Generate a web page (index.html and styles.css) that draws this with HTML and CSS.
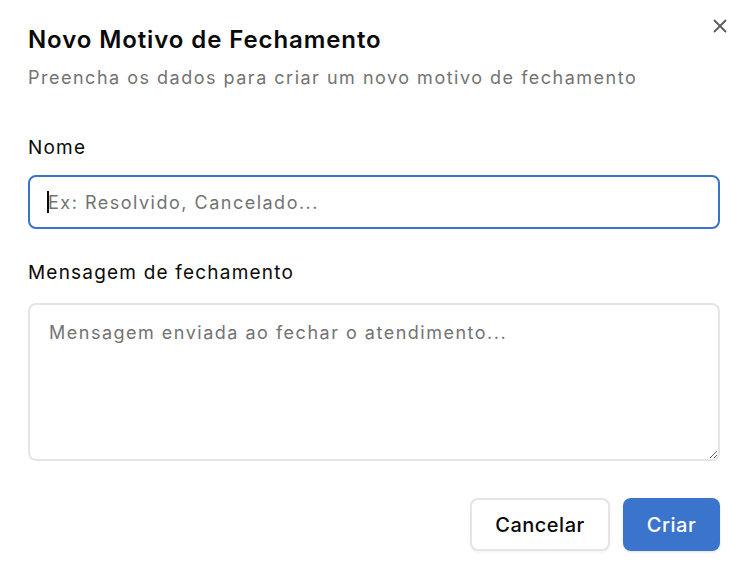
FILE: index.html
```html
<!DOCTYPE html>
<html lang="pt-BR">
<head>
    <meta charset="UTF-8">
    <meta name="viewport" content="width=device-width, initial-scale=1.0">
    <title>Novo Motivo de Fechamento</title>
    <link rel="stylesheet" href="styles.css">
</head>
<body>
    <div class="dialog">
        <button class="close-button" aria-label="Fechar">
            <svg width="16" height="16" viewBox="0 0 16 16" fill="none" stroke="#5a5a5a" stroke-width="1.8" stroke-linecap="round">
                <path d="M2.5 2.5 L13.5 13.5 M13.5 2.5 L2.5 13.5"/>
            </svg>
        </button>

        <div class="dialog-header">
            <h2>Novo Motivo de Fechamento</h2>
            <p>Preencha os dados para criar um novo motivo de fechamento</p>
        </div>

        <div class="field first">
            <label for="nome">Nome</label>
            <div class="input-wrap">
                <input type="text" id="nome" class="focused" placeholder="Ex: Resolvido, Cancelado...">
                <span class="caret"></span>
            </div>
        </div>

        <div class="field">
            <label for="mensagem" class="label-wide">Mensagem de fechamento</label>
            <textarea id="mensagem" placeholder="Mensagem enviada ao fechar o atendimento..."></textarea>
        </div>

        <div class="dialog-footer">
            <button class="btn btn-outline">Cancelar</button>
            <button class="btn btn-primary">Criar</button>
        </div>
    </div>
</body>
</html>
```

FILE: styles.css
```css
* {
    margin: 0;
    padding: 0;
    box-sizing: border-box;
}
body {
    font-family: Inter, 'Noto Sans', sans-serif;
    background-color: #fff;
    color: #0a0a0a;
}
.dialog {
    position: relative;
    width: 752px;
    height: 572px;
    padding: 24px 32px 0 28px;
}
.close-button {
    position: absolute;
    top: 18px;
    right: 24px;
    width: 16px;
    height: 16px;
    background: none;
    border: none;
    cursor: pointer;
}
.close-button svg {
    display: block;
}
.dialog-header h2 {
    font-size: 24px;
    line-height: 32px;
    font-weight: 600;
    letter-spacing: 0.9px;
    color: #0a0a0a;
}
.dialog-header p {
    margin-top: 8px;
    font-size: 18px;
    line-height: 28px;
    letter-spacing: 1.5px;
    color: #737373;
}
.field {
    margin-top: 30px;
}
.field.first {
    margin-top: 42px;
}
label {
    display: block;
    font-size: 19px;
    line-height: 28px;
    font-weight: 400;
    letter-spacing: 1.2px;
    margin-bottom: 13px;
}
.label-wide {
    margin-bottom: 16px;
}
.input-wrap {
    position: relative;
}
input, textarea {
    width: 100%;
    font-family: inherit;
    font-size: 18px;
    letter-spacing: 1.5px;
    color: #0a0a0a;
    border: 2px solid #e5e5e5;
    border-radius: 8px;
    background: #fff;
    outline: none;
}
input {
    height: 54px;
    padding: 0 18px;
}
input.focused {
    border-color: #3a74c9;
}
.caret {
    position: absolute;
    left: 19px;
    top: 16px;
    width: 2px;
    height: 22px;
    background: #0a0a0a;
}
textarea {
    display: block;
    height: 158px;
    padding: 14px 19px;
    line-height: 28px;
    resize: vertical;
}
input::placeholder, textarea::placeholder {
    color: #737373;
}
.dialog-footer {
    display: flex;
    justify-content: flex-end;
    gap: 13px;
    margin-top: 37px;
}
.btn {
    height: 53px;
    padding: 0;
    font-family: inherit;
    font-size: 20px;
    font-weight: 500;
    letter-spacing: 0.5px;
    border-radius: 8px;
    cursor: pointer;
}
.btn-outline {
    width: 140px;
    background: #fff;
    color: #0a0a0a;
    border: 2px solid #e5e5e5;
    box-shadow: 0 1px 3px rgba(0, 0, 0, 0.06);
}
.btn-primary {
    width: 97px;
    background: #3a74cd;
    color: #fff;
    border: none;
    box-shadow: 0 1px 3px rgba(0, 0, 0, 0.12);
}
```
